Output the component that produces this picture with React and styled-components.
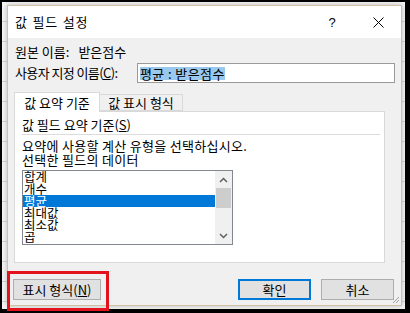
import React from "react";
import styled, { createGlobalStyle } from "styled-components";

const FONT = '"Noto Sans CJK KR", "Malgun Gothic", "Noto Sans", sans-serif';

const GlobalStyle = createGlobalStyle`
  html, body {
    margin: 0;
    padding: 0;
    background: #000;
  }
  body {
    font-family: ${FONT};
    font-size: 13px;
    color: #000;
  }
`;

const Frame = styled.div`
  width: 410px;
  height: 313px;
  box-sizing: border-box;
  padding: 2px 5px 4px 2px;
  background: #000;
  display: flex;
`;

const Sheet = styled.div`
  flex: 1;
  display: flex;
  padding: 3px 3px 3px 5px;
  background-color: #f6f6f6;
  background-image: repeating-linear-gradient(
    to bottom,
    transparent 0 19px,
    #d6d6d6 19px 20px
  );
`;

const Dialog = styled.div`
  width: 395px;
  height: 301px;
  box-sizing: border-box;
  border: 1px solid #cfc2a4;
  background: #f0f0f0;
  display: flex;
  flex-direction: column;
  box-shadow: 0 0 6px rgba(0, 0, 0, 0.25);
  position: relative;
`;

const TitleBar = styled.div`
  height: 32px;
  background: #fff;
  display: flex;
  align-items: center;
  padding-left: 7px;
`;

const TitleText = styled.div`
  flex: 1;
  line-height: 16px;
  letter-spacing: 0.8px;
  word-spacing: 1px;
`;

const TitleButton = styled.div`
  width: 46px;
  height: 32px;
  display: flex;
  align-items: center;
  justify-content: center;
  font-family: "Liberation Sans", sans-serif;
  font-size: 13px;
`;

const Body = styled.div`
  flex: 1;
  display: flex;
  flex-direction: column;
  padding: 0 6px 0 6px;
`;

const FieldRow = styled.div`
  display: flex;
  align-items: center;
  height: ${(p) => p.$h}px;
  margin-top: ${(p) => p.$top}px;
  padding-left: 1px;
  line-height: 16px;
`;

const Label = styled.span`
  white-space: pre;
  flex: none;
  width: ${(p) => (p.$w ? `${p.$w}px` : "auto")};
  letter-spacing: ${(p) => p.$ls || 0}px;
`;

const Value = styled.span`
  margin-left: 9px;
`;

const NameInput = styled.div`
  flex: 1;
  height: 20px;
  box-sizing: border-box;
  border: 1px solid #9a9a9a;
  background: #fff;
  display: flex;
  align-items: center;
  padding-left: 2px;
`;

const Selection = styled.span`
  background: #99c9ef;
  line-height: 13px;
  white-space: pre;
  letter-spacing: 0.4px;
`;

const TabStrip = styled.div`
  display: flex;
  align-items: flex-end;
  margin-top: 8px;
  height: 20px;
  position: relative;
  z-index: 1;
`;

const Tab = styled.div`
  box-sizing: border-box;
  height: ${(p) => (p.$active ? 20 : 17)}px;
  width: ${(p) => p.$w}px;
  border: 1px solid #d9d9d9;
  border-bottom: ${(p) => (p.$active ? "none" : "1px solid #d9d9d9")};
  border-left: ${(p) => (p.$first ? "1px solid #d9d9d9" : "none")};
  background: ${(p) => (p.$active ? "#fff" : "#f0f0f0")};
  display: flex;
  align-items: center;
  justify-content: center;
  line-height: 14px;
  margin-bottom: ${(p) => (p.$active ? -1 : 0)}px;
`;

const TabPanel = styled.div`
  height: 152px;
  margin-right: 10px;
  box-sizing: border-box;
  border: 1px solid #d9d9d9;
  background: #fff;
  padding: 5px 4px 0 7px;
  display: flex;
  flex-direction: column;
`;

const GroupHeading = styled.div`
  line-height: 16px;
  padding-bottom: 1px;
  border-bottom: 1px solid #dcdcdc;
`;

const Description = styled.div`
  margin-top: 4px;
  line-height: 14px;
  letter-spacing: 0.3px;
`;

const ListBox = styled.div`
  margin-top: 3px;
  width: 211px;
  height: 75px;
  box-sizing: border-box;
  border: 1px solid #828790;
  display: flex;
  background: #fff;
`;

const ListItems = styled.div`
  flex: 1;
`;

const ListItem = styled.div`
  height: 12px;
  line-height: 12px;
  font-size: 12.5px;
  padding-left: 1px;
  background: ${(p) => (p.$selected ? "#0078d7" : "transparent")};
  color: ${(p) => (p.$selected ? "#fff" : "#000")};
  white-space: nowrap;
`;

const ScrollBar = styled.div`
  width: 17px;
  background: #f0f0f0;
  display: flex;
  flex-direction: column;
  align-items: center;
`;

const ScrollArrow = styled.div`
  height: 17px;
  width: 17px;
  display: flex;
  align-items: center;
  justify-content: center;
`;

const ScrollThumb = styled.div`
  width: 15px;
  height: 20px;
  background: #cdcdcd;
`;

const ScrollTrack = styled.div`
  flex: 1;
`;

const Footer = styled.div`
  display: flex;
  align-items: center;
  margin-top: 16px;
  padding-right: 1px;
`;

const ButtonWrap = styled.div`
  position: relative;
  margin-left: -1px;
  margin-right: auto;
`;

const Button = styled.div`
  box-sizing: border-box;
  width: ${(p) => p.$w}px;
  height: 21px;
  background: #e1e1e1;
  border: ${(p) => (p.$default ? "2px solid #0078d7" : "1px solid #adadad")};
  display: flex;
  align-items: center;
  justify-content: center;
  line-height: 14px;
  margin-left: ${(p) => p.$ml || 0}px;
`;

const Highlight = styled.div`
  position: absolute;
  top: -8px;
  left: -6px;
  right: -8px;
  bottom: -11px;
  border: 3px solid #e3131b;
  pointer-events: none;
`;

const Grip = styled.svg`
  position: absolute;
  right: 1px;
  bottom: 1px;
`;

function CloseIcon() {
  return (
    <svg width="11" height="11" viewBox="0 0 11 11">
      <path d="M0.5 0.5 L10.5 10.5 M10.5 0.5 L0.5 10.5" stroke="#000" strokeWidth="1" fill="none" />
    </svg>
  );
}

function Chevron({ up }) {
  return (
    <svg width="9" height="6" viewBox="0 0 9 6">
      <path
        d={up ? "M1 5 L4.5 1.5 L8 5" : "M1 1 L4.5 4.5 L8 1"}
        stroke="#606060"
        strokeWidth="1.5"
        fill="none"
      />
    </svg>
  );
}

const summaryTypes = ["합계", "개수", "평균", "최대값", "최소값", "곱"];

export default function App() {
  return (
    <>
      <GlobalStyle />
      <Frame>
        <Sheet>
          <Dialog>
            <TitleBar>
              <TitleText>값 필드 설정</TitleText>
              <TitleButton>?</TitleButton>
              <TitleButton>
                <CloseIcon />
              </TitleButton>
            </TitleBar>
            <Body>
              <FieldRow $h={16} $top={6}>
                <Label>원본 이름:</Label>
                <Value>받은점수</Value>
              </FieldRow>
              <FieldRow $h={20} $top={3}>
                <Label $w={122} $ls={-0.6}>
                  사용자 지정 이름(<u>C</u>):
                </Label>
                <NameInput>
                  <Selection>평균 : 받은점수</Selection>
                </NameInput>
              </FieldRow>
              <TabStrip>
                <Tab $active $first $w={86}>
                  값 요약 기준
                </Tab>
                <Tab $w={83}>값 표시 형식</Tab>
              </TabStrip>
              <TabPanel>
                <GroupHeading>
                  값 필드 요약 기준(<u>S</u>)
                </GroupHeading>
                <Description>
                  요약에 사용할 계산 유형을 선택하십시오.
                  <br />
                  선택한 필드의 데이터
                </Description>
                <ListBox>
                  <ListItems>
                    {summaryTypes.map((t) => (
                      <ListItem key={t} $selected={t === "평균"}>
                        {t}
                      </ListItem>
                    ))}
                  </ListItems>
                  <ScrollBar>
                    <ScrollArrow>
                      <Chevron up />
                    </ScrollArrow>
                    <ScrollThumb />
                    <ScrollTrack />
                    <ScrollArrow>
                      <Chevron />
                    </ScrollArrow>
                  </ScrollBar>
                </ListBox>
              </TabPanel>
              <Footer>
                <ButtonWrap>
                  <Button $w={88}>
                    표시 형식(<u>N</u>)
                  </Button>
                  <Highlight />
                </ButtonWrap>
                <Button $w={73} $default>
                  확인
                </Button>
                <Button $w={73} $ml={10}>
                  취소
                </Button>
              </Footer>
            </Body>
            <Grip width="9" height="9" viewBox="0 0 9 9">
              <path d="M8 2 L2 8 M8 5 L5 8" stroke="#a0a0a0" strokeWidth="1" fill="none" />
            </Grip>
          </Dialog>
        </Sheet>
      </Frame>
    </>
  );
}
